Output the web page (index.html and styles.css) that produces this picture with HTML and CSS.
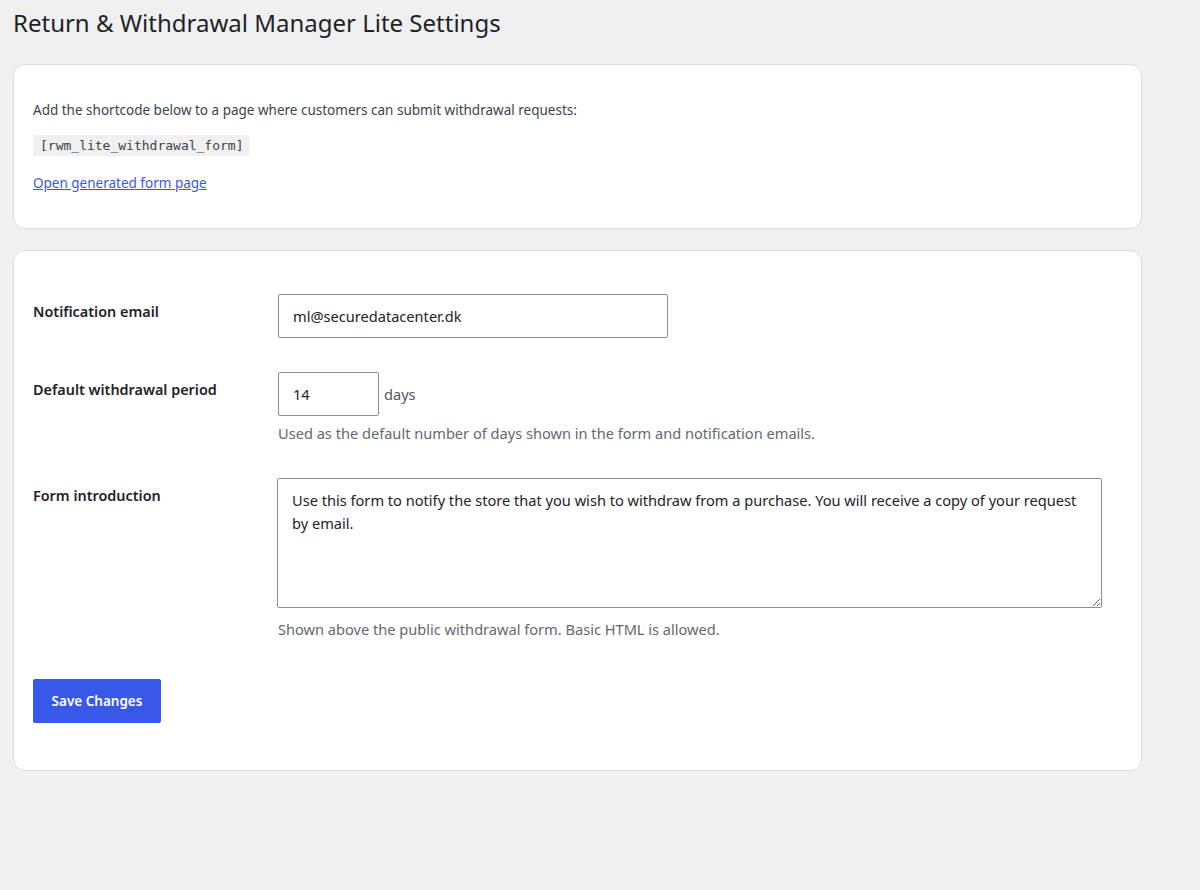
FILE: index.html
```html
<!DOCTYPE html>
<html lang="en">
<head>
<meta charset="utf-8">
<title>Return &amp; Withdrawal Manager Lite Settings</title>
<link rel="stylesheet" href="styles.css">
</head>
<body>
<div class="wrap">
  <h1 class="page-title">Return &amp; Withdrawal Manager Lite Settings</h1>

  <div class="card card-intro">
    <p class="intro-text">Add the shortcode below to a page where customers can submit withdrawal requests:</p>
    <p class="code-line"><code class="shortcode">[rwm_lite_withdrawal_form]</code></p>
    <p class="link-line"><a class="form-link" href="#">Open generated form page</a></p>
  </div>

  <form class="card card-settings">
    <div class="row">
      <label class="row-label" for="email">Notification email</label>
      <div class="row-field">
        <input class="text-input email-input" id="email" type="text" value="ml@securedatacenter.dk">
      </div>
    </div>
    <div class="row">
      <label class="row-label" for="period">Default withdrawal period</label>
      <div class="row-field">
        <div class="inline-field">
          <input class="text-input number-input" id="period" type="text" value="14">
          <span class="unit">days</span>
        </div>
        <p class="description desc-period">Used as the default number of days shown in the form and notification emails.</p>
      </div>
    </div>
    <div class="row">
      <label class="row-label" for="intro">Form introduction</label>
      <div class="row-field">
        <textarea class="textarea" id="intro">Use this form to notify the store that you wish to withdraw from a purchase. You will receive a copy of your request by email.</textarea>
        <p class="description desc-textarea">Shown above the public withdrawal form. Basic HTML is allowed.</p>
      </div>
    </div>
    <div class="submit-row">
      <button class="button-primary" type="button">Save Changes</button>
    </div>
  </form>
</div>
</body>
</html>
```

FILE: styles.css
```css
* { box-sizing: border-box; }

html, body {
  margin: 0;
  padding: 0;
  background: #f0f0f1;
}

body {
  font-family: "Noto Sans", "Open Sans", sans-serif;
  color: #1d2327;
}

.wrap {
  padding: 0 58px 0 13px;
  width: 1200px;
}

.page-title {
  margin: 0;
  padding: 8px 0 0 0;
  height: 64px;
  font-size: 24px;
  font-weight: 400;
  line-height: 30px;
  color: #1d2327;
}

.card {
  background: #fff;
  border: 1px solid #dcdcde;
  border-radius: 12px;
  width: 1129px;
}

.card-intro {
  padding: 32px 19px 28px 19px;
  margin-bottom: 21px;
  height: 165px;
}

.intro-text {
  margin: 0;
  font-size: 13.5px;
  line-height: 26px;
  color: #3c434a;
}

.code-line {
  margin: 12px 0 0 0;
  line-height: 21px;
  height: 21px;
}

.shortcode {
  display: inline-block;
  vertical-align: top;
  font-family: "DejaVu Sans Mono", "Liberation Mono", monospace;
  font-size: 13px;
  line-height: 21px;
  height: 21px;
  padding: 0 5px 0 7px;
  background: #f0f0f1;
  color: #3c434a;
}

.link-line {
  margin: 16px 0 0 0;
  font-size: 13.5px;
  line-height: 22px;
}

.form-link {
  color: #3858e9;
  text-decoration: underline;
}

.card-settings {
  padding: 43px 19px 47px 19px;
  margin: 0;
}

.row {
  display: grid;
  grid-template-columns: 245px 1fr;
  align-items: start;
  margin-bottom: 34px;
}

.row-label {
  font-size: 14.4px;
  font-weight: 600;
  line-height: 20px;
  padding-top: 8px;
  color: #1d2327;
}

.row-field {
  display: flex;
  flex-direction: column;
  align-items: flex-start;
}

.text-input {
  font-family: "Noto Sans", "Open Sans", sans-serif;
  font-size: 14.6px;
  color: #1d2327;
  height: 44px;
  border: 1px solid #8c8f94;
  border-radius: 2px;
  padding: 0 14px;
  background: #fff;
  margin: 0;
  outline: none;
}

.email-input { width: 390px; }

.number-input { width: 101px; }

.inline-field {
  display: flex;
  align-items: center;
}

.unit {
  font-size: 14.6px;
  margin-left: 5px;
  color: #50575e;
  line-height: 44px;
}

.description {
  margin: 7px 0 0 0;
  font-size: 14.6px;
  line-height: 20px;
  color: #646970;
}

.desc-period { margin-bottom: 1px; }

.textarea {
  display: block;
  width: 825px;
  height: 130px;
  font-family: "Noto Sans", "Open Sans", sans-serif;
  font-size: 14.6px;
  line-height: 23px;
  color: #1d2327;
  padding: 10px 14px;
  border: 1px solid #8c8f94;
  border-radius: 2px;
  margin: 0 0 0 -1px;
  resize: vertical;
  outline: none;
}

.desc-textarea { margin-top: 11px; }

.submit-row {
  padding-top: 6px;
}

.button-primary {
  display: block;
  font-family: "Noto Sans", "Open Sans", sans-serif;
  font-size: 13.5px;
  font-weight: 600;
  color: #fff;
  background: #3858e9;
  border: 1px solid #3858e9;
  border-radius: 2px;
  height: 44px;
  width: 128px;
  padding: 0;
  cursor: pointer;
}
```
